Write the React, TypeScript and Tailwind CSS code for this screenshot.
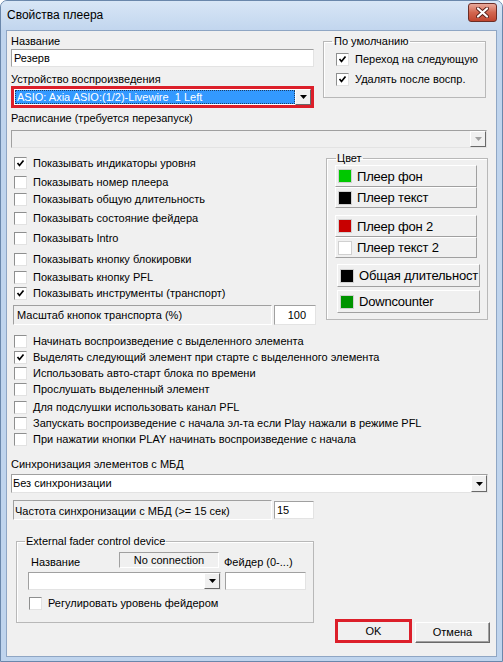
import React from "react";

function Check({ checked }: { checked?: boolean }) {
  return (
    <span className="w-[13px] h-[13px] shrink-0 bg-white border border-t-[#8e8f8f] border-l-[#8e8f8f] border-r-[#e2e2e2] border-b-[#e2e2e2] flex items-center justify-center">
      {checked && (
        <svg width="9" height="9" viewBox="0 0 9 9">
          <path d="M1.5 4 L3.5 6.5 L7.5 1.5" stroke="#000" strokeWidth="1.7" fill="none" />
        </svg>
      )}
    </span>
  );
}

function CheckRow({ label, checked, className = "" }: { label: string; checked?: boolean; className?: string }) {
  return (
    <div className={`flex items-center h-[13px] ${className}`}>
      <Check checked={checked} />
      <span className="ml-[6px] text-[11px] leading-[13px] whitespace-nowrap">{label}</span>
    </div>
  );
}

function Arrow({ disabled }: { disabled?: boolean }) {
  return (
    <svg width="7" height="4" viewBox="0 0 7 4">
      <path d="M0 0 H7 L3.5 4 Z" fill={disabled ? "#a0a0a0" : "#000"} />
    </svg>
  );
}

function DropBtn({ disabled }: { disabled?: boolean }) {
  return (
    <span className="w-[16px] h-full shrink-0 bg-[#f0f0f0] border border-t-white border-l-white border-r-[#696969] border-b-[#696969] flex items-center justify-center">
      <Arrow disabled={disabled} />
    </span>
  );
}

function ColorBtn({ color, label, className = "" }: { color: string; label: string; className?: string }) {
  return (
    <div
      className={`flex items-center bg-[#f0f0f0] border border-t-white border-l-white border-r-[#a0a0a0] border-b-[#a0a0a0] overflow-hidden ${className}`}
    >
      <span className="w-[14px] h-[14px] ml-[2px] shrink-0 border border-[#d0d0d0]" style={{ backgroundColor: color }} />
      <span className="ml-[5px] text-[13px] leading-[15px] tracking-[-0.2px] whitespace-nowrap">{label}</span>
    </div>
  );
}

export default function App() {
  return (
    <div className="w-[503px] h-[662px] flex flex-col bg-[#bfd4ed] border border-[#6a87ab] rounded-t-[7px] font-['Liberation_Sans',Arial,sans-serif] text-black overflow-hidden">
      {/* title bar */}
      <div className="h-[29px] shrink-0 flex items-start justify-between bg-gradient-to-b from-[#d8e6f6] to-[#c2d6ee]">
        <span className="ml-[6px] mt-[7px] text-[12px] leading-[14px]">Свойства плеера</span>
        <span className="mr-[5px] mt-[2px] w-[29px] h-[19px] rounded-[3px] border border-[#6b2d26] bg-gradient-to-b from-[#e8a99b] via-[#d2664f] to-[#c0452f] flex items-center justify-center">
          <svg width="13" height="11" viewBox="0 0 13 11">
            <path d="M2 1.5 L11 9.5 M11 1.5 L2 9.5" stroke="#5a231d" strokeWidth="4" strokeLinecap="round" />
            <path d="M2 1.5 L11 9.5 M11 1.5 L2 9.5" stroke="#fff" strokeWidth="2.2" strokeLinecap="round" />
          </svg>
        </span>
      </div>

      {/* client */}
      <div className="flex-1 mx-[5px] mb-[4px] bg-[#f0f0f0] border border-[#8fa6c4] pl-[4px] flex flex-col">
        {/* top section */}
        <div className="flex">
          <div className="w-[303px] flex flex-col">
            <div className="mt-[4px] h-[13px] text-[11px] leading-[13px]">Название</div>
            <div className="mt-[1px] h-[18px] bg-white border border-t-[#a0a0a0] border-l-[#a0a0a0] border-r-[#e3e3e3] border-b-[#e3e3e3] text-[11px] leading-[16px] pl-[2px]">
              Резерв
            </div>
            <div className="mt-[6px] h-[13px] text-[11px] leading-[13px]">Устройство воспроизведения</div>
            <div className="h-[22px] border-[3px] border-[#dc1f2a] bg-white flex items-stretch">
              <div className="flex-1 flex items-center bg-white pl-[1px] py-[1px]">
                <div className="h-full w-full bg-[#3399ff] border border-dotted border-[#1b3d66] text-white text-[11px] leading-[13px] pl-[1px] whitespace-nowrap">
                  ASIO: Axia ASIO:(1/2)-Livewire{"\u00a0"} 1 Left
                </div>
              </div>
              <DropBtn />
            </div>
            <div className="mt-[4px] h-[13px] text-[11px] leading-[13px]">Расписание (требуется перезапуск)</div>
          </div>

          <fieldset className="ml-[9px] mt-[4px] w-[163px] h-[63px] border border-[#b8b8b8] shadow-[inset_1px_1px_0_#fff] pl-[12px]">
            <legend className="ml-[-4px] px-[2px] text-[11px] leading-[13px]">По умолчанию</legend>
            <CheckRow className="mt-[5px]" checked label="Переход на следующую" />
            <CheckRow className="mt-[7px]" checked label="Удалять после воспр." />
          </fieldset>
        </div>

        <div className="mt-[5px] w-[476px] h-[18px] flex bg-[#f0f0f0] border border-t-[#a0a0a0] border-l-[#a0a0a0] border-r-[#e3e3e3] border-b-[#e3e3e3]">
          <div className="flex-1" />
          <DropBtn disabled />
        </div>

        {/* middle section */}
        <div className="flex">
          <div className="w-[305px] flex flex-col pl-[3px]">
            <CheckRow className="mt-[9px]" checked label="Показывать индикаторы уровня" />
            <CheckRow className="mt-[6px]" label="Показывать номер плеера" />
            <CheckRow className="mt-[4px]" label="Показывать общую длительность" />
            <CheckRow className="mt-[6px]" label="Показывать состояние фейдера" />
            <CheckRow className="mt-[7px]" label="Показывать Intro" />
            <CheckRow className="mt-[8px]" label="Показывать кнопку блокировки" />
            <CheckRow className="mt-[5px]" label="Показывать кнопку PFL" />
            <CheckRow className="mt-[3px]" checked label="Показывать инструменты (транспорт)" />
            <div className="mt-[5px] ml-[-1px] flex h-[20px]">
              <div className="w-[259px] h-full flex items-center pl-[3px] border border-t-[#a0a0a0] border-l-[#a0a0a0] border-r-white border-b-white text-[11px]">
                Масштаб кнопок транспорта (%)
              </div>
              <div className="ml-[2px] w-[42px] h-full flex items-center justify-end pr-[9px] bg-white border border-t-[#a0a0a0] border-l-[#a0a0a0] border-r-[#e3e3e3] border-b-[#e3e3e3] text-[11px]">
                100
              </div>
            </div>
          </div>

          <fieldset className="ml-[10px] mt-[4px] w-[162px] h-[168px] border border-[#b8b8b8] shadow-[inset_1px_1px_0_#fff] pl-[8px] flex flex-col">
            <legend className="ml-[1px] px-[1px] text-[11px] leading-[13px]">Цвет</legend>
            <ColorBtn className="w-[142px] h-[22px]" color="#00c800" label="Плеер фон" />
            <ColorBtn className="w-[142px] h-[21px]" color="#000000" label="Плеер текст" />
            <ColorBtn className="mt-[7px] w-[142px] h-[22px]" color="#c80000" label="Плеер фон 2" />
            <ColorBtn className="w-[142px] h-[21px]" color="#ffffff" label="Плеер текст 2" />
            <ColorBtn className="mt-[6px] ml-[2px] w-[143px] h-[23px]" color="#000000" label="Общая длительност" />
            <ColorBtn className="mt-[3px] ml-[2px] w-[143px] h-[23px]" color="#009400" label="Downcounter" />
          </fieldset>
        </div>

        {/* lower checkboxes */}
        <div className="flex flex-col pl-[3px]">
          <CheckRow className="mt-[10px]" label="Начинать воспроизведение с выделенного элемента" />
          <CheckRow className="mt-[3px]" checked label="Выделять следующий элемент при старте с выделенного элемента" />
          <CheckRow className="mt-[3px]" label="Использовать авто-старт блока по времени" />
          <CheckRow className="mt-[3px]" label="Прослушать выделенный элемент" />
          <CheckRow className="mt-[5px]" label="Для подслушки использовать канал PFL" />
          <CheckRow className="mt-[3px]" label="Запускать воспроизведение с начала эл-та если Play нажали в режиме PFL" />
          <CheckRow className="mt-[3px]" label="При нажатии кнопки PLAY начинать воспроизведение с начала" />
        </div>

        <div className="mt-[12px] h-[13px] text-[11px] leading-[13px]">Синхронизация элементов с МБД</div>
        <div className="mt-[3px] w-[477px] h-[19px] flex bg-white border border-t-[#a0a0a0] border-l-[#a0a0a0] border-r-[#e3e3e3] border-b-[#e3e3e3]">
          <div className="flex-1 flex items-center pl-[1px] text-[11px]">Без синхронизации</div>
          <DropBtn />
        </div>

        <div className="mt-[7px] ml-[2px] flex h-[20px]">
          <div className="w-[259px] h-full flex items-start pt-[2px] pl-[1px] border border-t-[#a0a0a0] border-l-[#a0a0a0] border-r-white border-b-white text-[11px]">
            Частота синхронизации с МБД (&gt;= 15 сек)
          </div>
          <div className="ml-[2px] mt-[1px] w-[40px] h-[18px] flex items-center pl-[2px] bg-white border border-t-[#a0a0a0] border-l-[#a0a0a0] border-r-[#e3e3e3] border-b-[#e3e3e3] text-[11px]">
            15
          </div>
        </div>

        {/* bottom section */}
        <div className="flex items-start">
          <fieldset className="ml-[5px] mt-[15px] w-[298px] h-[88px] border border-[#b8b8b8] shadow-[inset_1px_1px_0_#fff] flex flex-col">
            <legend className="ml-[8px] px-[1px] text-[11px] leading-[13px]">External fader control device</legend>
            <div className="mt-[4px] flex items-end h-[16px]">
              <span className="ml-[14px] w-[88px] text-[11px] leading-[13px] mb-[-1px]">Название</span>
              <span className="w-[100px] h-[16px] flex items-center justify-center border border-t-[#a0a0a0] border-l-[#a0a0a0] border-r-white border-b-white text-[11px]">
                No connection
              </span>
              <span className="ml-[5px] text-[11px] leading-[13px] mb-[-1px]">Фейдер (0-...)</span>
            </div>
            <div className="mt-[4px] flex h-[18px]">
              <div className="ml-[11px] w-[193px] h-full flex bg-white border border-t-[#a0a0a0] border-l-[#a0a0a0] border-r-[#e3e3e3] border-b-[#e3e3e3]">
                <div className="flex-1" />
                <DropBtn />
              </div>
              <div className="ml-[4px] w-[81px] h-full bg-white border border-t-[#a0a0a0] border-l-[#a0a0a0] border-r-[#e3e3e3] border-b-[#e3e3e3]" />
            </div>
            <CheckRow className="mt-[7px] ml-[12px]" label="Регулировать уровень фейдером" />
          </fieldset>

          <div className="ml-[21px] mt-[99px] flex items-end">
            <div className="w-[77px] h-[24px] border-[3px] border-[#dc1f2a] flex">
              <div className="flex-1 flex items-center justify-center bg-[#f0f0f0] text-[11px]">OK</div>
            </div>
            <div className="ml-[3px] w-[75px] h-[21px] flex items-center justify-center bg-[#f0f0f0] border border-t-white border-l-white border-r-[#696969] border-b-[#696969] shadow-[inset_-1px_-1px_0_#a0a0a0] text-[11px]">
              Отмена
            </div>
          </div>
        </div>
      </div>
    </div>
  );
}
